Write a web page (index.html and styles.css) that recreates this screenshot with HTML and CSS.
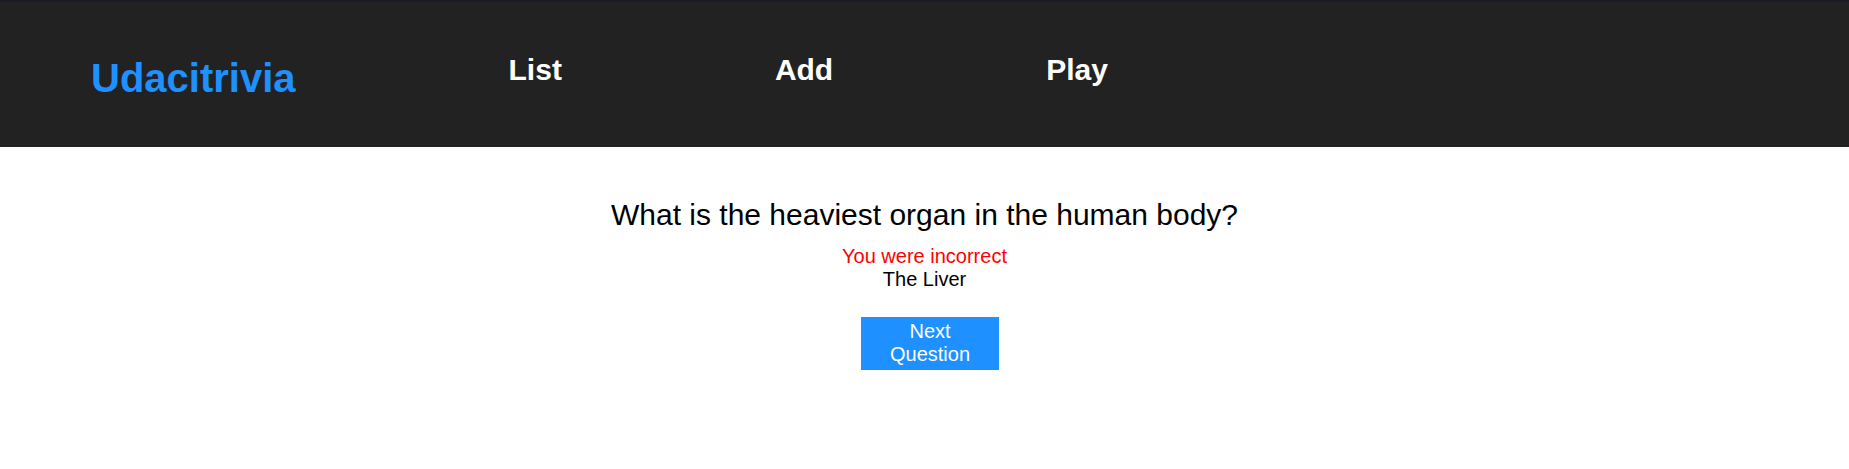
FILE: index.html
```html
<!DOCTYPE html>
<html lang="en">
<head>
<meta charset="utf-8">
<title>Udacitrivia</title>
<link rel="stylesheet" href="styles.css">
</head>
<body>
<header class="app-header">
  <h1 class="logo">Udacitrivia</h1>
  <h2 class="nav-item">List</h2>
  <h2 class="nav-item">Add</h2>
  <h2 class="nav-item">Play</h2>
</header>
<main class="quiz-play">
  <div class="quiz-question">What is the heaviest organ in the human body?</div>
  <div class="quiz-result wrong">You were incorrect</div>
  <div class="quiz-answer">The Liver</div>
  <button class="next-question">Next Question</button>
</main>
</body>
</html>
```
FILE: styles.css
```css
html, body {
  margin: 0;
  padding: 0;
  background: #ffffff;
  font-family: "Liberation Sans", Arial, sans-serif;
}

.app-header {
  box-sizing: border-box;
  height: 147px;
  background: #222222;
  border-top: 2px solid #1b1b2b;
  display: flex;
  align-items: flex-start;
  gap: 213px;
  padding: 51px 0 0 91px;
}

.logo {
  margin: 3px 0 0;
  font-size: 40px;
  font-weight: bold;
  color: #1e90ff;
  line-height: normal;
}

.nav-item {
  margin: 0;
  font-size: 30px;
  font-weight: bold;
  color: #ffffff;
  line-height: normal;
}

.quiz-play {
  text-align: center;
  padding-top: 51px;
}

.quiz-question {
  font-size: 30px;
  color: #000000;
  margin-bottom: 13px;
}

.quiz-result,
.quiz-answer {
  font-size: 20px;
  line-height: 23px;
  color: #000000;
}

.quiz-result.wrong {
  color: #ff0000;
}

.next-question {
  box-sizing: border-box;
  margin: 26px 0 0 11px;
  width: 138px;
  height: 53px;
  padding: 3px 10px 4px;
  border: none;
  background: #1e90ff;
  color: #ffffff;
  font-family: "Liberation Sans", Arial, sans-serif;
  font-size: 20px;
  line-height: 23px;
  cursor: pointer;
}
```
